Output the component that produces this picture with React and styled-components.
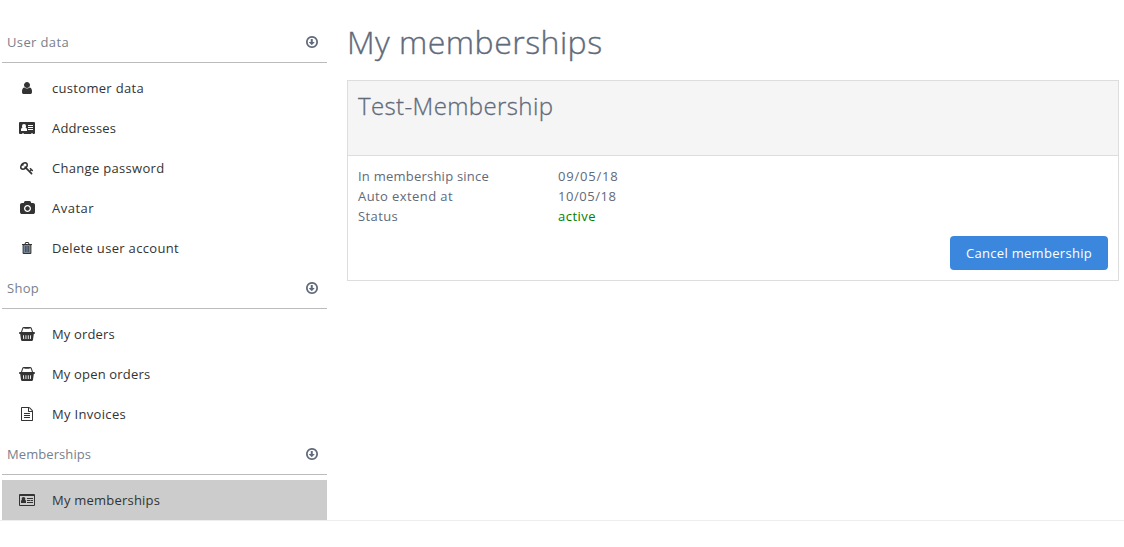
import React from 'react';
import styled, { createGlobalStyle } from 'styled-components';

const GlobalStyle = createGlobalStyle`
  * { box-sizing: border-box; }
  body {
    margin: 0;
    background: #fff;
    color: #606a7b;
    font: 400 13px/20px "Open Sans", "Noto Sans", sans-serif;
  }
`;

const Page = styled.div`
  display: flex;
  align-items: flex-start;
  height: 521px;
  padding: 22px 5px 0 2px;
  border-bottom: 1px solid #eee;
`;

const Sidebar = styled.nav`
  flex: 0 0 325px;
`;

const SectionHeader = styled.div`
  display: flex;
  align-items: center;
  justify-content: space-between;
  height: 41px;
  margin-bottom: 5px;
  padding: 0 9px 0 5px;
  border-bottom: 1px solid #bbb;
`;

const MenuItem = styled.a`
  display: flex;
  align-items: center;
  height: 40px;
  padding-left: 15px;
  color: #333;
  background: ${(p) => (p.$active ? '#ccc' : 'transparent')};
`;

const IconSlot = styled.span`
  display: flex;
  justify-content: center;
  width: 20px;
  margin-right: 15px;
`;

const Glyph = styled.svg`
  display: block;
  height: ${(p) => p.$size || 14}px;
  fill: currentColor;
`;

const Label = styled.span`
  letter-spacing: ${(p) => p.$track || 0}px;
  color: ${(p) => p.$color || 'inherit'};
  white-space: nowrap;
`;

const Main = styled.main`
  flex: 1;
  margin-left: 20px;
`;

const Title = styled.h1`
  margin: 0 0 19px;
  font-size: 32px;
  font-weight: 300;
  line-height: 39px;
  letter-spacing: 0.48px;
  -webkit-text-stroke: 0.35px currentColor;
`;

const Card = styled.section`
  border: 1px solid #ddd;
`;

const CardHeader = styled.header`
  height: 75px;
  padding: 10px;
  background: #f5f5f5;
  border-bottom: 1px solid #ddd;
`;

const CardTitle = styled.h2`
  margin: 0;
  font-size: 24px;
  font-weight: 300;
  line-height: 30px;
  letter-spacing: 0.38px;
  -webkit-text-stroke: 0.3px currentColor;
`;

const CardBody = styled.div`
  display: flex;
  flex-direction: column;
  padding: 10px;
`;

const Detail = styled.div`
  display: grid;
  grid-template-columns: 200px 1fr;
  height: 20px;
`;

const Button = styled.button`
  align-self: flex-end;
  width: 158px;
  height: 34px;
  margin-top: 10px;
  padding: 0;
  border: 0;
  border-radius: 4px;
  background: #3a87dd;
  color: #fff;
  font: inherit;
`;

const glyphs = {
  user: {
    box: '256 128 1280 1536',
    d: 'M1536 1399q0 109-62.5 187t-150.5 78h-854q-88 0-150.5-78t-62.5-187q0-85 8.5-160.5t31.5-152 58.5-131 94-89 134.5-34.5q131 128 313 128t313-128q76 0 134.5 34.5t94 89 58.5 131 31.5 152 8.5 160.5zm-256-887q0 159-112.5 271.5t-271.5 112.5-271.5-112.5-112.5-271.5 112.5-271.5 271.5-112.5 271.5 112.5 112.5 271.5z',
    size: 12,
  },
  key: {
    box: '0 0 1792 1792',
    d: 'M832 512q0-80-56-136t-136-56-136 56-56 136q0 42 19 83-41-19-83-19-80 0-136 56t-56 136 56 136 136 56 136-56 56-136q0-42-19-83 41 19 83 19 80 0 136-56t56-136zm851 704q0 17-49 66t-66 49q-9 0-28.5-16t-36.5-33-38.5-40-24.5-26l-96 96 220 220q28 28 28 68 0 42-39 81t-81 39q-40 0-68-28l-671-671q-176 131-365 131-163 0-265.5-102.5t-102.5-265.5q0-160 95-313t248-248 313-95q163 0 265.5 102.5t102.5 265.5q0 189-131 365l355 355 96-96q-3-3-26-24.5t-40-38.5-33-36.5-16-28.5q0-17 49-66t66-49q13 0 23 10 6 6 46 44.5t82 79.5 86.5 86 73 78 28.5 41z',
  },
  camera: {
    box: '0 0 1920 1792',
    d: 'M960 672q119 0 203.5 84.5t84.5 203.5-84.5 203.5-203.5 84.5-203.5-84.5-84.5-203.5 84.5-203.5 203.5-84.5zm704-416q106 0 181 75t75 181v896q0 106-75 181t-181 75h-1408q-106 0-181-75t-75-181v-896q0-106 75-181t181-75h224l51-136q19-49 69.5-84.5t103.5-35.5h512q53 0 103.5 35.5t69.5 84.5l51 136h224zm-704 1152q185 0 316.5-131.5t131.5-316.5-131.5-316.5-316.5-131.5-316.5 131.5-131.5 316.5 131.5 316.5 316.5 131.5z',
  },
  // Bin body is tinted between its narrow ribs
  trash: {
    box: '0 0 12 12',
    d: 'M1 2H3.5L4.2 .5Q4.4 0 5 0H7Q7.6 0 7.8 .5L8.5 2H11V3H10.4V11Q10.4 12 9.4 12H2.6Q1.6 12 1.6 11V3H1ZM4.6 2H7.4L7 1H5ZM2.8 3.2V10.8H9.2V3.2Z',
    ribs: 'M3 3H9V11H3Z',
    size: 12,
  },
  file: {
    box: '0 0 1792 1792',
    d: 'M1596 380q28 28 48 76t20 88v1152q0 40-28 68t-68 28h-1344q-40 0-68-28t-28-68v-1600q0-40 28-68t68-28h896q40 0 88 20t76 48zm-444-244v376h376q-10-29-22-41l-313-313q-12-12-41-22zm384 1528v-1024h-416q-40 0-68-28t-28-68v-416h-768v1536h1280zm-1024-864q0-14 9-23t23-9h704q14 0 23 9t9 23v64q0 14-9 23t-23 9h-704q-14 0-23-9t-9-23v-64zm736 224q14 0 23 9t9 23v64q0 14-9 23t-23 9h-704q-14 0-23-9t-9-23v-64q0-14 9-23t23-9h704zm0 256q14 0 23 9t9 23v64q0 14-9 23t-23 9h-704q-14 0-23-9t-9-23v-64q0-14 9-23t23-9h704z',
  },
  down: {
    box: '128 128 1536 1536',
    d: 'M1216 928q0 14-10 24l-319 319q-10 9-23 9t-23-9l-320-320q-15-16-7-35 8-20 30-20h192v-352q0-14 9-23t23-9h192q14 0 23 9t9 23v352h192q14 0 23 9t9 23zm-320-576q-148 0-273 73t-198 198-73 273 73 273 198 198 273 73 273-73 198-198 73-273-73-273-198-198-273-73zm768 544q0 209-103 385.5t-279.5 279.5-385.5 103-385.5-103-279.5-279.5-103-385.5 103-385.5 279.5-279.5 385.5-103 385.5 103 279.5 279.5 103 385.5z',
    size: 12,
  },
  // Filled contact card with notches along the bottom edge
  card: {
    box: '0 0 16 12',
    d: 'M1 0H15Q16 0 16 1V11Q16 12 15 12H13.6V11H12.4V12H4.6V11H3.4V12H1Q0 12 0 11V1Q0 0 1 0ZM2 9H8V7.6Q8 5.8 6.5 5.5Q7 5 7 4Q7 2 5 2T3 4Q3 5 3.5 5.5Q2 5.8 2 7.6ZM9 3V4H14V3ZM9 5V6H14V5ZM9 7V8H14V7Z',
    size: 12,
  },
  // Outlined identity card with a heavy top edge
  idCard: {
    box: '0 0 16 12',
    d: 'M1 0H15Q16 0 16 1V11Q16 12 15 12H1Q0 12 0 11V1Q0 0 1 0ZM1 2V11H15V2ZM2 9V7.6Q2 6 3 5.8Q2.6 5.4 2.6 4.8Q2.6 3 4.5 3T6.4 4.8Q6.4 5.4 6 5.8Q7 6 7 7.6V9ZM8 4H14V5H8ZM8 6H11V7H8ZM11.5 6H14V7H11.5ZM8 8H14V9H8Z',
    size: 12,
  },
  basket: {
    box: '0 0 16 14',
    d: 'M1 5H2L3.2 1.2Q3.6 0 5 0H11Q12.4 0 12.8 1.2L14 5H15Q16 5 16 6T15 7H14.8L14 12.8Q13.8 14 12.7 14H3.3Q2.2 14 2 12.8L1.2 7H1Q0 7 0 6T1 5ZM3.1 5H12.9L11.9 1.7Q11.8 1.2 11.2 1.2H10.5V1.8H5.5V1.2H4.8Q4.2 1.2 4.1 1.7ZM4 8.2L4.3 12H5.2L4.9 8.2ZM6.5 8.2V12H7.4V8.2ZM8.8 8.2V12H9.7V8.2ZM11.2 8.2L10.9 12H11.8L12.1 8.2Z',
  },
};

function Icon({ name }) {
  const g = glyphs[name];
  return (
    <Glyph viewBox={g.box} $size={g.size} aria-hidden="true">
      <path fillRule={['card', 'idCard', 'basket', 'trash'].includes(name) ? 'evenodd' : 'nonzero'} d={g.d} />
      {g.ribs && <path d={g.ribs} fill="#75859a" />}
      {g.ribs && <path d="M4 4H4.6V10H4ZM5.7 4H6.3V10H5.7ZM7.4 4H8V10H7.4Z" />}
    </Glyph>
  );
}

const sections = [
  {
    title: 'User data', track: 0.37,
    items: [
      { icon: 'user', text: 'customer data', track: 0.31 },
      { icon: 'card', text: 'Addresses', track: 0.16 },
      { icon: 'key', text: 'Change password', track: 0.31 },
      { icon: 'camera', text: 'Avatar', track: 0.48 },
      { icon: 'trash', text: 'Delete user account', track: 0.32 },
    ],
  },
  {
    title: 'Shop', track: 0.28,
    items: [
      { icon: 'basket', text: 'My orders', track: 0.15 },
      { icon: 'basket', text: 'My open orders', track: 0.17 },
      { icon: 'file', text: 'My Invoices', track: 0.32 },
    ],
  },
  {
    title: 'Memberships', track: 0.08,
    items: [{ icon: 'idCard', text: 'My memberships', track: 0.22, active: true }],
  },
];

const details = [
  { name: 'In membership since', track: 0.23, value: '09/05/18', valueTrack: 0.8 },
  { name: 'Auto extend at', track: 0.41, value: '10/05/18', valueTrack: 0.54 },
  { name: 'Status', track: 0.4, value: 'active', valueTrack: 0.5, color: '#008000' },
];

export default function App() {
  return (
    <>
      <GlobalStyle />
      <Page>
        <Sidebar>
          {sections.map((s) => (
            <React.Fragment key={s.title}>
              <SectionHeader>
                <Label $track={s.track} $color="#77808e">{s.title}</Label>
                <Icon name="down" />
              </SectionHeader>
              {s.items.map((item) => (
                <MenuItem key={item.text} $active={item.active}>
                  <IconSlot><Icon name={item.icon} /></IconSlot>
                  <Label $track={item.track}>{item.text}</Label>
                </MenuItem>
              ))}
            </React.Fragment>
          ))}
        </Sidebar>
        <Main>
          <Title>My memberships</Title>
          <Card>
            <CardHeader><CardTitle>Test-Membership</CardTitle></CardHeader>
            <CardBody>
              {details.map((d) => (
                <Detail key={d.name}>
                  <Label $track={d.track}>{d.name}</Label>
                  <Label $track={d.valueTrack} $color={d.color}>{d.value}</Label>
                </Detail>
              ))}
              <Button><Label $track={0.3}>Cancel membership</Label></Button>
            </CardBody>
          </Card>
        </Main>
      </Page>
    </>
  );
}
